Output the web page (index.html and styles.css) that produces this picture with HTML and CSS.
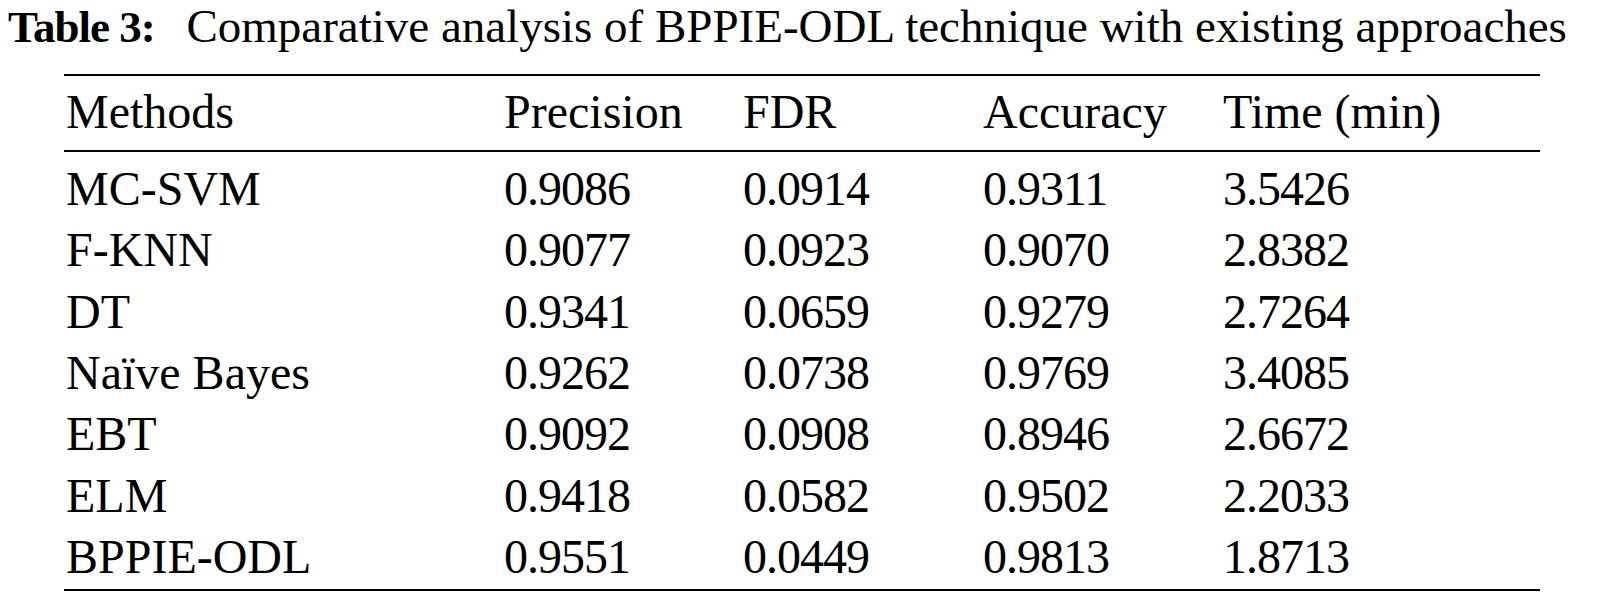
FILE: index.html
```html
<!DOCTYPE html>
<html lang="en">
<head>
<meta charset="utf-8">
<title>Table 3</title>
<link rel="stylesheet" href="styles.css">
</head>
<body>
<div class="page">
  <p class="caption"><span class="label">Table 3:</span> Comparative analysis of BPPIE-ODL technique with existing approaches</p>
  <div class="table">
    <div class="row head">
      <span>Methods</span><span>Precision</span><span>FDR</span><span>Accuracy</span><span>Time (min)</span>
    </div>
    <div class="body">
      <div class="row"><span>MC-SVM</span><span class="num">0.9086</span><span class="num">0.0914</span><span class="num">0.9311</span><span class="num">3.5426</span></div>
      <div class="row"><span>F-KNN</span><span class="num">0.9077</span><span class="num">0.0923</span><span class="num">0.9070</span><span class="num">2.8382</span></div>
      <div class="row"><span>DT</span><span class="num">0.9341</span><span class="num">0.0659</span><span class="num">0.9279</span><span class="num">2.7264</span></div>
      <div class="row"><span>Naïve Bayes</span><span class="num">0.9262</span><span class="num">0.0738</span><span class="num">0.9769</span><span class="num">3.4085</span></div>
      <div class="row"><span>EBT</span><span class="num">0.9092</span><span class="num">0.0908</span><span class="num">0.8946</span><span class="num">2.6672</span></div>
      <div class="row"><span>ELM</span><span class="num">0.9418</span><span class="num">0.0582</span><span class="num">0.9502</span><span class="num">2.2033</span></div>
      <div class="row"><span>BPPIE-ODL</span><span class="num">0.9551</span><span class="num">0.0449</span><span class="num">0.9813</span><span class="num">1.8713</span></div>
    </div>
  </div>
</div>
</body>
</html>
```
FILE: styles.css
```css
html, body {
  margin: 0;
  padding: 0;
  background: #ffffff;
}

.page {
  font-family: "Liberation Serif", "Times New Roman", serif;
  color: #000000;
  width: 1604px;
}

.caption {
  margin: 0;
  padding-left: 8px;
  font-size: 47px;
  line-height: 53px;
  white-space: nowrap;
}

.label {
  font-weight: bold;
  font-size: 45px;
  letter-spacing: -1px;
  margin-right: 20px;
}

.table {
  margin-top: 20px;
  margin-left: 64px;
  width: 1476px;
  border-top: 2px solid #000;
  border-bottom: 2px solid #000;
  font-size: 48px;
}

.row {
  display: grid;
  grid-template-columns: 438px 239px 240px 240px 1fr;
  padding-left: 2px;
  line-height: 61.33px;
  white-space: nowrap;
}

.row.head {
  line-height: 72px;
  padding-bottom: 2px;
  border-bottom: 2px solid #000;
}

.num {
  letter-spacing: -1px;
}

.body {
  padding: 6px 0 2px;
}
```
